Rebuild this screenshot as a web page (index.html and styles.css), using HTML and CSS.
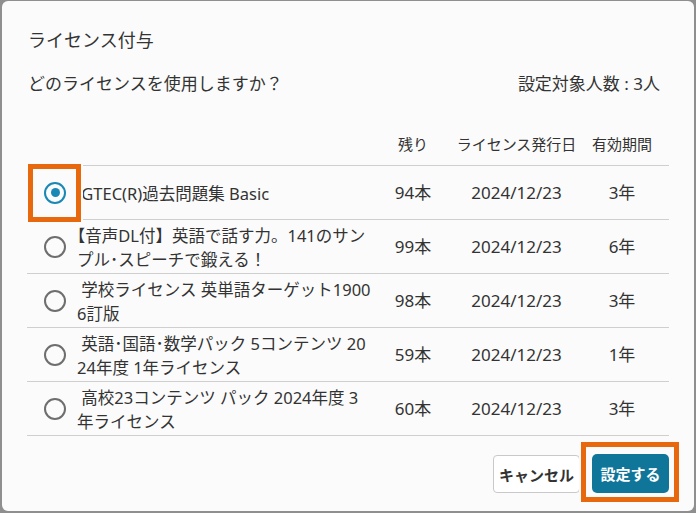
FILE: index.html
```html
<!DOCTYPE html>
<html lang="ja">
<head>
<meta charset="utf-8">
<title>ライセンス付与</title>
<link rel="stylesheet" href="styles.css">
</head>
<body>
<div class="dialog">
  <h1 class="title">ライセンス付与</h1>
  <div class="question-row">
    <span class="question">どのライセンスを使用しますか？</span>
    <span class="count">設定対象人数 : 3人</span>
  </div>
  <table class="licenses">
    <colgroup>
      <col class="c-radio">
      <col class="c-name">
      <col class="c-left">
      <col class="c-date">
      <col class="c-term">
    </colgroup>
    <thead>
      <tr>
        <th></th>
        <th></th>
        <th class="num">残り</th>
        <th class="num">ライセンス発行日</th>
        <th class="num term">有効期間</th>
      </tr>
    </thead>
    <tbody>
      <tr>
        <td class="radio-cell"><span class="radio checked"><span class="mark"></span></span></td>
        <td class="name"> GTEC(R)過去問題集 Basic</td>
        <td class="num">94本</td>
        <td class="num">2024/12/23</td>
        <td class="num term">3年</td>
      </tr>
      <tr>
        <td class="radio-cell"><span class="radio"></span></td>
        <td class="name">【音声DL付】英語で話す力。141のサンプル･スピーチで鍛える！</td>
        <td class="num">99本</td>
        <td class="num">2024/12/23</td>
        <td class="num term">6年</td>
      </tr>
      <tr>
        <td class="radio-cell"><span class="radio"></span></td>
        <td class="name"> 学校ライセンス 英単語ターゲット1900 6訂版</td>
        <td class="num">98本</td>
        <td class="num">2024/12/23</td>
        <td class="num term">3年</td>
      </tr>
      <tr>
        <td class="radio-cell"><span class="radio"></span></td>
        <td class="name"> 英語･国語･数学パック 5コンテンツ 2024年度 1年ライセンス</td>
        <td class="num">59本</td>
        <td class="num">2024/12/23</td>
        <td class="num term">1年</td>
      </tr>
      <tr>
        <td class="radio-cell"><span class="radio"></span></td>
        <td class="name"> 高校23コンテンツ パック 2024年度 3年ライセンス</td>
        <td class="num">60本</td>
        <td class="num">2024/12/23</td>
        <td class="num term">3年</td>
      </tr>
    </tbody>
  </table>
  <div class="actions">
    <button class="btn btn-cancel">キャンセル</button>
    <button class="btn btn-primary">設定する<span class="highlight-btn"></span></button>
  </div>
</div>
</body>
</html>
```

FILE: styles.css
```css
html, body {
  margin: 0;
  padding: 0;
}
body {
  background: #8f8f8f;
  width: 696px;
  height: 513px;
  overflow: hidden;
  font-family: "Noto Sans", "Noto Sans CJK JP", sans-serif;
  color: #333;
}
.dialog {
  position: relative;
  box-sizing: border-box;
  margin: 1px 2px 0 2px;
  width: 692px;
  height: 510px;
  background: #fbfbfb;
  border-radius: 6px;
  padding: 26px 25px 0 25px;
}
.title {
  margin: 0 0 0 1px;
  font-size: 18px;
  line-height: 26px;
  font-weight: 400;
  color: #333;
}
.question-row {
  margin-top: 19px;
  display: flex;
  justify-content: space-between;
  align-items: center;
  font-size: 17px;
  line-height: 24px;
}
.question {
  margin-left: 1px;
}
.count {
  margin-right: 9px;
}
.licenses {
  margin-top: 30px;
  width: 642px;
  table-layout: fixed;
  border-collapse: collapse;
  font-size: 17px;
  line-height: 24px;
}
.c-radio { width: 50px; }
.c-name { width: 306px; }
.c-left { width: 60px; }
.c-date { width: 147px; }
.c-term { width: 79px; }

.licenses th {
  font-size: 15px;
  line-height: 22px;
  font-weight: 400;
  height: 35px;
  padding: 0 0 4px 0;
  vertical-align: middle;
  border-bottom: 1px solid #cfcfcf;
}
.licenses td {
  height: 53px;
  padding: 0;
  vertical-align: middle;
  border-bottom: 1px solid #cfcfcf;
}
.num {
  text-align: center;
}
.term {
  padding-right: 15px !important;
}
.licenses td.name {
  height: 51px;
  font-size: 16.5px;
  line-height: 24px;
  padding: 2px 11px 0 0;
  word-break: break-all;
  white-space: pre-wrap;
  text-spacing-trim: trim-start;
}
.radio-cell {
  padding-left: 17px !important;
}
.radio {
  position: relative;
  display: flex;
  align-items: center;
  justify-content: center;
  box-sizing: border-box;
  width: 22px;
  height: 22px;
  border: 2px solid #6e6e6e;
  border-radius: 50%;
}
.radio.checked {
  border-color: #1a88b4;
}
.radio .mark {
  width: 9px;
  height: 9px;
  border-radius: 50%;
  background: #1a88b4;
}
.radio.checked::after {
  content: "";
  position: absolute;
  left: -18px;
  top: -20px;
  width: 53px;
  height: 58px;
  box-sizing: border-box;
  border: 5px solid #e8680d;
  box-shadow: 0 0 0 2px #fbfbfb;
}
.actions {
  margin-top: 18px;
  display: flex;
  justify-content: flex-end;
  gap: 12px;
}
.btn {
  font-family: "Noto Sans", "Noto Sans CJK JP", sans-serif;
  font-size: 15px;
  font-weight: 700;
  border-radius: 4px;
  padding: 0;
  cursor: pointer;
}
.btn-cancel {
  width: 87px;
  height: 38px;
  margin-top: 1px;
  background: #fff;
  color: #333;
  border: 1px solid #c9c9c9;
}
.btn-primary {
  position: relative;
  width: 77px;
  height: 39px;
  background: #0f769a;
  color: #fff;
  border: none;
  border-radius: 5px;
}
.highlight-btn {
  position: absolute;
  left: -11px;
  top: -12px;
  width: 98px;
  height: 60px;
  box-sizing: border-box;
  border: 5px solid #e8680d;
  box-shadow: 0 0 0 2px #fbfbfb;
}
```
